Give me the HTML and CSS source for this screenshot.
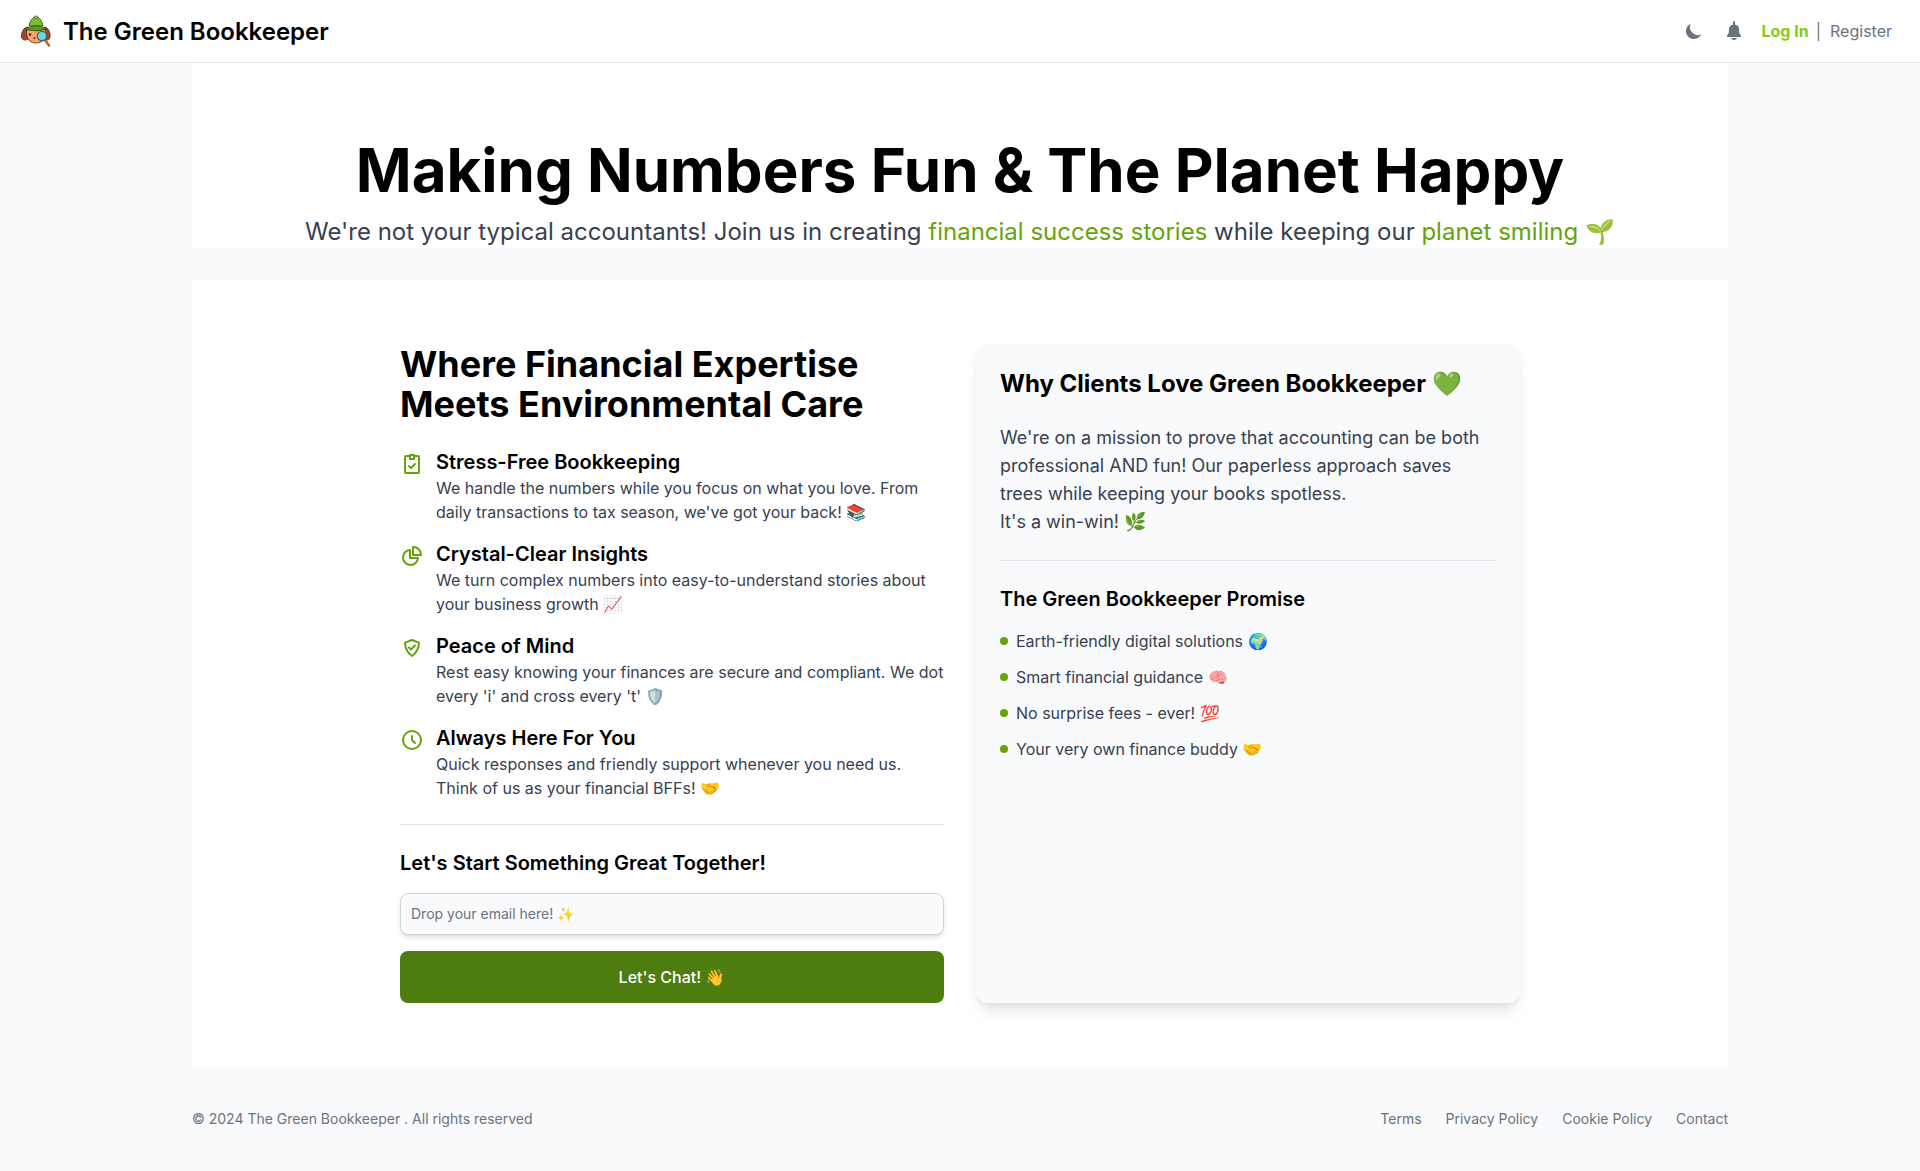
FILE: index.html
```html
<!DOCTYPE html>
<html lang="en">
<head>
    <meta charset="UTF-8">
    <meta name="viewport" content="width=device-width, initial-scale=1.0">
    <link rel="stylesheet" href="styles.css">
    <title>The Green Bookkeeper</title>
</head>
<body>

    <nav class="navbar">
        <a class="brand" href="#">
            <svg class="logo" viewBox="0 0 32 32" aria-hidden="true">
                <!-- ears -->
                <path d="M8 12 C4 12 1 17 1.5 22 C2 25 5 26 8 24 Z" fill="#a8432a" stroke="#4a2a1c" stroke-width="0.8"/>
                <path d="M24 12 C28 12 30.5 17 30 22 C29.5 25 27 26 24 24 Z" fill="#a8432a" stroke="#4a2a1c" stroke-width="0.8"/>
                <!-- face -->
                <path d="M7 14 H25 C27 20 25 28 16 28 C8 28 5 20 7 14 Z" fill="#f2a566" stroke="#4a2a1c" stroke-width="0.8"/>
                <!-- hat -->
                <path d="M9 11 C10 5 13 2 16 2 C19 2 22 5 23 11 Z" fill="#7cbb2e" stroke="#2f4a14" stroke-width="0.8"/>
                <path d="M14.5 1 H17.5 L18 3 H14 Z" fill="#c4bc84" stroke="#2f4a14" stroke-width="0.5"/>
                <path d="M5 14.5 Q16 7 27 14.5 Q16 17 5 14.5 Z" fill="#5c9e1e" stroke="#2f4a14" stroke-width="0.8"/>
                <!-- eye and nose -->
                <circle cx="10" cy="19.5" r="1.2" fill="#2b2320"/>
                <path d="M13 22.5 h3 l-1.5 1.8 Z" fill="#2b2320"/>
                <!-- magnifier -->
                <path d="M25 25 L29 30.5" stroke="#c0622c" stroke-width="2.6" stroke-linecap="round"/>
                <circle cx="22" cy="21" r="4.6" fill="#6ad8dc" stroke="#3f5f6e" stroke-width="1.3"/>
            </svg>
            <span>The Green Bookkeeper</span>
        </a>
        <div class="nav-right">
            <svg class="nav-icon moon" viewBox="0 0 20 20" aria-hidden="true"><path d="M17.293 13.293A8 8 0 0 1 6.707 2.707a8.001 8.001 0 1 0 10.586 10.586z"/></svg>
            <svg class="nav-icon bell" viewBox="0 0 24 24" aria-hidden="true"><path d="M17.133 12.632v-1.8a5.406 5.406 0 0 0-4.154-5.262.955.955 0 0 0 .021-.106V3.1a1 1 0 0 0-2 0v2.364a.955.955 0 0 0 .021.106 5.406 5.406 0 0 0-4.154 5.262v1.8C6.867 15.018 5 15.614 5 16.807 5 17.4 5 18 5.538 18h12.924C19 18 19 17.4 19 16.807c0-1.193-1.867-1.789-1.867-4.175ZM8.823 19a3.453 3.453 0 0 0 6.354 0H8.823Z"/></svg>
            <div class="auth-links">
                <a class="login" href="#">Log In</a>
                <span class="auth-sep">|</span>
                <a class="register" href="#">Register</a>
            </div>
        </div>
    </nav>

    <div class="container">
        <section class="hero">
            <h1>Making Numbers Fun &amp; The Planet Happy</h1>
            <p>We're not your typical accountants! Join us in creating <span class="green">financial success stories</span> while keeping our <span class="green">planet smiling</span> 🌱</p>
        </section>

        <section class="content">
            <div class="columns">
                <div class="left">
                    <h2>Where Financial Expertise Meets Environmental Care</h2>

                    <ul class="features">
                        <li>
                            <svg class="feature-icon" viewBox="0 0 24 24" aria-hidden="true"><path d="M15 4h3a1 1 0 0 1 1 1v15a1 1 0 0 1-1 1H6a1 1 0 0 1-1-1V5a1 1 0 0 1 1-1h3"/><path d="M10 3v4h4V3h-4Z"/><path d="M9 14l2 2 4-4"/></svg>
                            <div>
                                <h3>Stress-Free Bookkeeping</h3>
                                <p>We handle the numbers while you focus on what you love. From daily transactions to tax season, we've got your back! 📚</p>
                            </div>
                        </li>
                        <li>
                            <svg class="feature-icon" viewBox="0 0 24 24" aria-hidden="true"><path d="M10 6.025A7.5 7.5 0 1 0 17.975 14H10V6.025Z"/><path d="M13.5 3c-.169 0-.334.014-.5.025V11h7.975c.011-.166.025-.331.025-.5A7.5 7.5 0 0 0 13.5 3Z"/></svg>
                            <div>
                                <h3>Crystal-Clear Insights</h3>
                                <p>We turn complex numbers into easy-to-understand stories about your business growth 📈</p>
                            </div>
                        </li>
                        <li>
                            <svg class="feature-icon" viewBox="0 0 24 24" aria-hidden="true"><path d="M12 20a16.405 16.405 0 0 1-5.092-5.804A16.694 16.694 0 0 1 5 6.666L12 4l7 2.667a16.695 16.695 0 0 1-1.908 7.529A16.406 16.406 0 0 1 12 20Z"/><path d="M9 11.5l2 2 4-4"/></svg>
                            <div>
                                <h3>Peace of Mind</h3>
                                <p>Rest easy knowing your finances are secure and compliant. We dot every 'i' and cross every 't' 🛡️</p>
                            </div>
                        </li>
                        <li>
                            <svg class="feature-icon" viewBox="0 0 24 24" aria-hidden="true"><path d="M12 8v4l3 3m6-3a9 9 0 1 1-18 0 9 9 0 0 1 18 0Z"/></svg>
                            <div>
                                <h3>Always Here For You</h3>
                                <p>Quick responses and friendly support whenever you need us. Think of us as your financial BFFs! 🤝</p>
                            </div>
                        </li>
                    </ul>

                    <hr class="divider">

                    <h4 class="cta-title">Let's Start Something Great Together!</h4>
                    <input class="email" type="email" placeholder="Drop your email here! ✨">
                    <button class="chat-button">Let's Chat! 👋</button>
                </div>

                <div class="card">
                    <h3 class="card-title">Why Clients Love Green Bookkeeper 💚</h3>
                    <p class="card-text">We're on a mission to prove that accounting can be both professional AND fun! Our paperless approach saves trees while keeping your books spotless.<br>It's a win-win! 🌿</p>
                    <hr class="divider card-divider">
                    <h4 class="promise-title">The Green Bookkeeper Promise</h4>
                    <ul class="promise">
                        <li>Earth-friendly digital solutions 🌍</li>
                        <li>Smart financial guidance 🧠</li>
                        <li>No surprise fees - ever! 💯</li>
                        <li>Your very own finance buddy 🤝</li>
                    </ul>
                </div>
            </div>
        </section>

        <footer class="footer">
            <span>© 2024 The Green Bookkeeper . All rights reserved</span>
            <div class="footer-links">
                <a href="#">Terms</a>
                <a href="#">Privacy Policy</a>
                <a href="#">Cookie Policy</a>
                <a href="#">Contact</a>
            </div>
        </footer>
    </div>

</body>
</html>
```

FILE: styles.css
```css
* {
    box-sizing: border-box;
}

body {
    margin: 0;
    background: #f9fafb;
    color: #000000;
    font-family: Inter, 'Noto Sans', sans-serif;
}

a {
    text-decoration: none;
}

ul {
    list-style: none;
    margin: 0;
    padding: 0;
}

.navbar {
    display: flex;
    justify-content: space-between;
    align-items: center;
    height: 63px;
    padding: 0 28px 0 20px;
    background: #ffffff;
    border-bottom: 1px solid #e5e7eb;
}

.brand {
    display: flex;
    align-items: center;
    gap: 11px;
    color: #000000;
    font-size: 24px;
    font-weight: 600;
}

.logo {
    width: 32px;
    height: 32px;
}

.nav-right {
    display: flex;
    align-items: center;
    gap: 16px;
}

.nav-icon {
    fill: #6b7280;
}

.moon {
    width: 20px;
    height: 20px;
    margin-right: 2px;
}

.bell {
    width: 24px;
    height: 24px;
}

.auth-links {
    display: flex;
    align-items: center;
    font-size: 16px;
}

.login {
    color: #84cc16;
    font-weight: 700;
}

.auth-sep {
    margin: 0 9px 0 7px;
    color: #6b7280;
}

.register {
    color: #6b7280;
}

.container {
    width: 1536px;
    margin: 0 auto;
}

.hero {
    height: 185px;
    padding-top: 77px;
    background: #ffffff;
    text-align: center;
}

.hero h1 {
    margin: 0;
    font-size: 60px;
    line-height: 60px;
    font-weight: 700;
}

.hero p {
    margin: 16px 0 0;
    color: #374151;
    font-size: 24px;
    line-height: 32px;
    white-space: nowrap;
}

.green {
    color: #65a30d;
}

.content {
    margin-top: 32px;
    padding: 64px 0;
    background: #ffffff;
}

.columns {
    display: grid;
    grid-template-columns: 1fr 1fr;
    gap: 32px;
    width: 1120px;
    margin: 0 auto;
}

.left h2 {
    margin: 0 0 24px;
    font-size: 36px;
    line-height: 40px;
    font-weight: 700;
}

.features {
    display: flex;
    flex-direction: column;
    gap: 16px;
}

.features li {
    display: flex;
    gap: 12px;
}

.feature-icon {
    flex: none;
    width: 24px;
    height: 24px;
    margin-top: 4px;
    fill: none;
    stroke: #65a30d;
    stroke-width: 2;
    stroke-linecap: round;
    stroke-linejoin: round;
}

.features h3 {
    margin: 0;
    font-size: 20px;
    line-height: 28px;
    font-weight: 600;
}

.features p {
    margin: 0;
    color: #374151;
    font-size: 16px;
    line-height: 24px;
}

.divider {
    margin: 24px 0;
    border: none;
    border-top: 1px solid #e5e7eb;
}

.cta-title {
    margin: 0 0 16px;
    font-size: 20px;
    line-height: 28px;
    font-weight: 600;
}

.email {
    display: block;
    width: 100%;
    height: 42px;
    padding: 0 10px 2px;
    background: #f9fafb;
    border: 1px solid #d1d5db;
    border-radius: 8px;
    box-shadow: 0 4px 6px -1px rgba(0, 0, 0, 0.1), 0 2px 4px -2px rgba(0, 0, 0, 0.1);
    font-family: Inter, sans-serif;
    font-size: 14px;
}

.email::placeholder {
    color: #6b7280;
}

.chat-button {
    display: block;
    width: 100%;
    height: 52px;
    margin-top: 16px;
    background: #4d7c0f;
    color: #ffffff;
    border: none;
    border-radius: 8px;
    font-family: Inter, sans-serif;
    font-size: 16px;
    font-weight: 500;
}

.card {
    padding: 24px;
    background: #f9fafb;
    border-radius: 12px;
    box-shadow: 0 10px 15px -3px rgba(0, 0, 0, 0.1), 0 4px 6px -4px rgba(0, 0, 0, 0.1);
}

.card-title {
    margin: 0 0 24px;
    font-size: 24px;
    line-height: 32px;
    font-weight: 700;
}

.card-text {
    margin: 0;
    color: #374151;
    font-size: 18px;
    line-height: 28px;
}

.card-divider {
    margin: 24px 0;
}

.promise-title {
    margin: 0 0 16px;
    font-size: 20px;
    line-height: 28px;
    font-weight: 600;
}

.promise {
    display: flex;
    flex-direction: column;
    gap: 12px;
}

.promise li {
    display: flex;
    align-items: center;
    gap: 8px;
    color: #374151;
    font-size: 16px;
    line-height: 24px;
}

.promise li::before {
    content: "";
    width: 8px;
    height: 8px;
    background: #65a30d;
    border-radius: 50%;
}

.footer {
    display: flex;
    justify-content: space-between;
    align-items: center;
    padding: 42px 0;
    color: #6b7280;
    font-size: 14px;
    line-height: 20px;
}

.footer-links {
    display: flex;
    gap: 24px;
}

.footer-links a {
    color: #6b7280;
}
```
